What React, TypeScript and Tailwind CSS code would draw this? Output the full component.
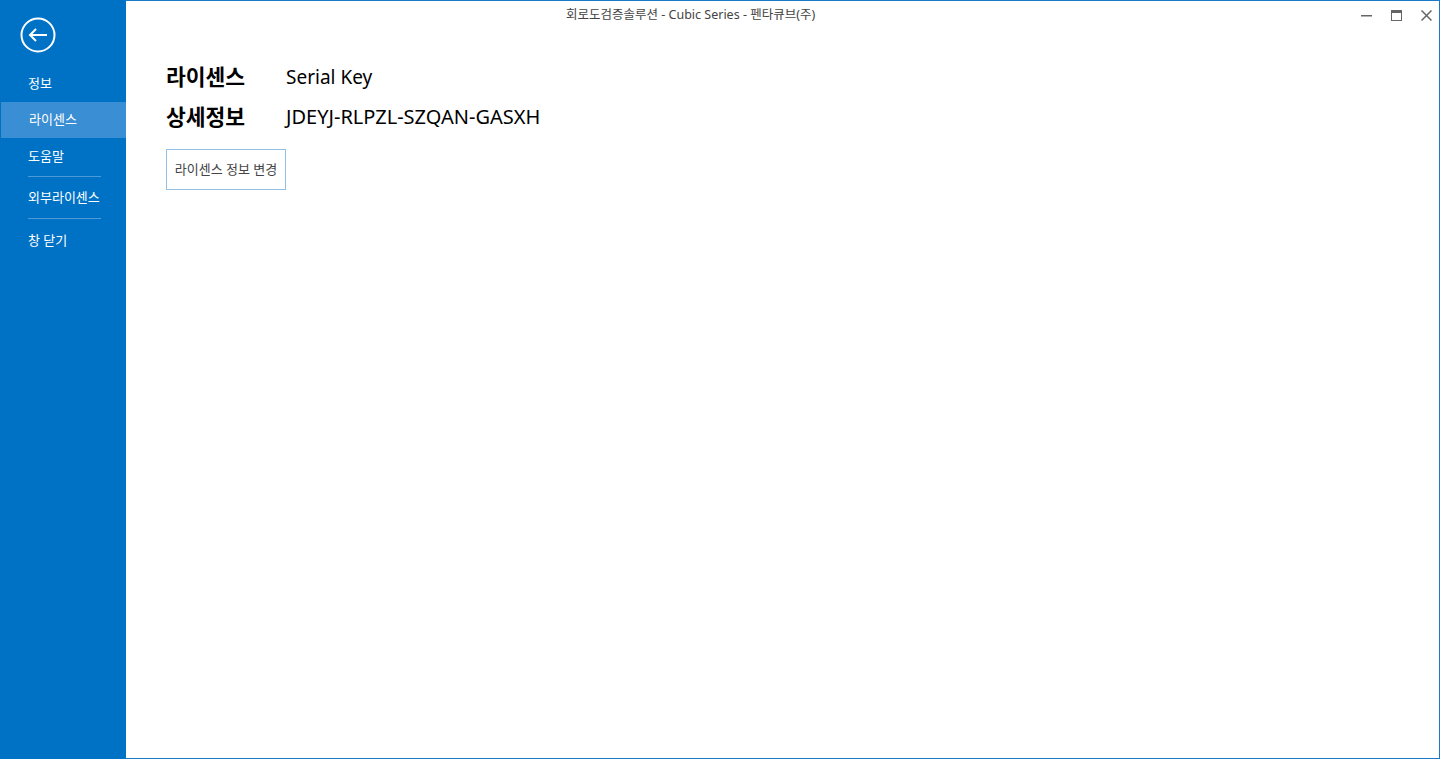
import React from 'react'

const font = { fontFamily: '"Noto Sans", "Noto Sans CJK KR", sans-serif' }

function NavItem({ label, active, h }: { label: string; active?: boolean; h: string }) {
  return (
    <div
      className={`flex items-center pl-[28px] text-[13px] text-white ${h} ${
        active ? 'ml-px bg-[#3a8ed4] pl-[27px]' : ''
      }`}
    >
      {label}
    </div>
  )
}

function Separator() {
  return <div className="ml-[28px] h-px w-[73px] bg-[#4d9ad9]" />
}

export default function App() {
  return (
    <div className="flex h-[759px] w-full bg-white" style={font}>
      {/* Backstage nav */}
      <aside className="flex w-[126px] shrink-0 flex-col bg-[#0072c6]">
        <div className="flex h-[66px] items-start pl-[20px] pt-[17px]">
          <svg width="36" height="36" viewBox="0 0 36 36" fill="none" stroke="white">
            <circle cx="18" cy="18" r="16.5" strokeWidth="2" />
            <path d="M10 18h17" strokeWidth="2" />
            <path d="M16 12l-6 6 6 6" strokeWidth="2" />
          </svg>
        </div>
        <NavItem label="정보" h="h-[36px]" />
        <NavItem label="라이센스" h="h-[36px]" active />
        <NavItem label="도움말" h="h-[38px]" />
        <Separator />
        <NavItem label="외부라이센스" h="h-[41px]" />
        <Separator />
        <NavItem label="창 닫기" h="h-[43px]" />
      </aside>

      {/* Main panel */}
      <main className="flex flex-1 flex-col border-b border-r border-t border-[#1979ca]">
        <div className="flex h-[28px] items-center">
          <div className="flex-1 pl-[440px] text-[12.5px] text-[#444]">
            회로도검증솔루션 - Cubic Series - 펜타큐브(주)
          </div>
          <div className="flex items-center gap-[19px] pr-[7px] text-[#666]">
            <svg width="11" height="11" viewBox="0 0 11 11">
              <rect x="0" y="5" width="11" height="1.5" fill="currentColor" />
            </svg>
            <svg width="11" height="11" viewBox="0 0 11 11" fill="none" stroke="currentColor">
              <rect x="0.5" y="0.5" width="10" height="10" />
              <rect x="0.5" y="0.5" width="10" height="2" fill="currentColor" />
            </svg>
            <svg width="11" height="11" viewBox="0 0 11 11" fill="none" stroke="currentColor" strokeWidth="1.5">
              <path d="M0.5 0.5l10 10M10.5 0.5l-10 10" />
            </svg>
          </div>
        </div>

        <div className="flex flex-col pl-[40px] pt-[33px]">
          <div className="flex h-[30px] items-center">
            <div className="w-[120px] text-[21.5px] font-bold text-black">라이센스</div>
            <div className="text-[19px] text-black">Serial Key</div>
          </div>
          <div className="mt-[10px] flex h-[30px] items-center">
            <div className="w-[120px] text-[21.5px] font-bold text-black">상세정보</div>
            <div className="text-[20px] text-black">JDEYJ-RLPZL-SZQAN-GASXH</div>
          </div>
          <button className="mt-[17px] flex h-[41px] w-[120px] items-center justify-center border border-[#94bfe4] bg-white text-[13px] text-[#444]">
            라이센스 정보 변경
          </button>
        </div>
      </main>
    </div>
  )
}
